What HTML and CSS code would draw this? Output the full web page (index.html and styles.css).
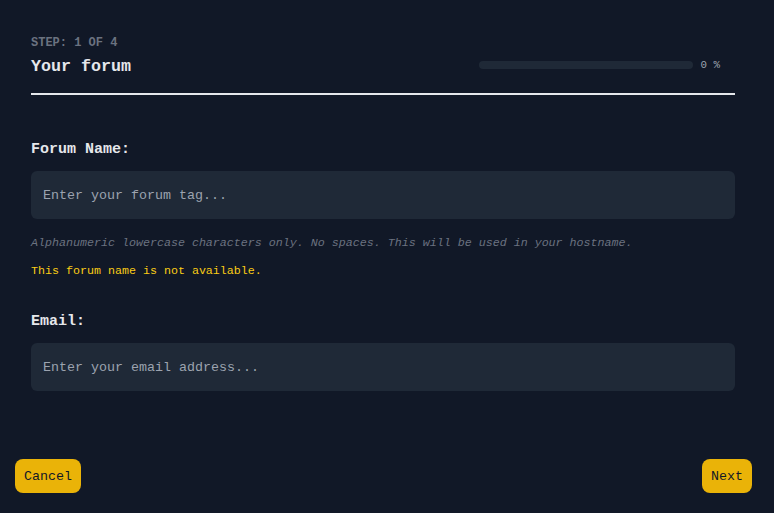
FILE: index.html
```html
<!DOCTYPE html>
<html>
<head>
<meta charset="utf-8">
<link rel="stylesheet" href="styles.css">
</head>
<body>
<div class="app">
  <div class="main">
    <header class="header">
      <div class="titles">
        <div class="step">STEP: 1 OF 4</div>
        <h1 class="title">Your forum</h1>
      </div>
      <div class="progress">
        <div class="bar"><div class="fill" style="width:0%"></div></div>
        <span class="pct">0 %</span>
      </div>
    </header>
    <form class="form">
      <div class="field">
        <label class="label">Forum Name:</label>
        <input class="input" type="text" placeholder="Enter your forum tag..." autofocus>
        <p class="hint">Alphanumeric lowercase characters only. No spaces. This will be used in your hostname.</p>
        <p class="error">This forum name is not available.</p>
      </div>
      <div class="field">
        <label class="label">Email:</label>
        <input class="input" type="text" placeholder="Enter your email address...">
      </div>
    </form>
  </div>
  <footer class="footer">
    <button class="btn">Cancel</button>
    <button class="btn">Next</button>
  </footer>
</div>
</body>
</html>
```
FILE: styles.css
```css
html, body {
  margin: 0;
  padding: 0;
  background: #111827;
  height: 100%;
}
body {
  font-family: "Liberation Mono", "DejaVu Sans Mono", monospace;
  color: #e5e7eb;
}
.app {
  height: 513px;
  display: flex;
  flex-direction: column;
  justify-content: space-between;
}
.main {
  padding: 0 39px 0 31px;
}
.header {
  display: flex;
  justify-content: space-between;
  align-items: flex-end;
  padding-top: 35px;
  padding-bottom: 16px;
  border-bottom: 2px solid #e5e7eb;
}
.step {
  font-size: 12px;
  font-weight: bold;
  color: #6b7280;
  line-height: 16px;
}
.title {
  margin: 6px 0 0;
  font-size: 16.67px;
  font-weight: bold;
  color: #e5e7eb;
  line-height: 20px;
}
.progress {
  display: flex;
  align-items: center;
  gap: 8px;
  padding-bottom: 5px;
  margin-right: 15px;
}
.bar {
  width: 214px;
  height: 8px;
  border-radius: 4px;
  background: #1f2937;
  overflow: hidden;
}
.fill {
  height: 100%;
  background: #eab308;
}
.pct {
  font-size: 10.8px;
  color: #9ca3af;
  line-height: 14px;
}
.form {
  padding-top: 45px;
}
.field {
  display: flex;
  flex-direction: column;
  margin-bottom: 33px;
}
.label {
  font-size: 15px;
  font-weight: bold;
  color: #e5e7eb;
  line-height: 20px;
  margin-bottom: 11px;
}
.input {
  height: 48px;
  box-sizing: border-box;
  border: none;
  border-radius: 6px;
  background: #1f2937;
  padding: 0 12px;
  font-family: inherit;
  font-size: 13.33px;
  color: #e5e7eb;
  outline: none;
  caret-color: #e5e7eb;
}
.input::placeholder {
  color: #9ca3af;
}
.hint {
  margin: 16px 0 0;
  font-size: 11.67px;
  font-style: italic;
  color: #6b7280;
  line-height: 16px;
}
.error {
  margin: 12px 0 0;
  font-size: 11.67px;
  color: #facc15;
  line-height: 16px;
}
.footer {
  display: flex;
  justify-content: space-between;
  padding: 0 22px 20px 15px;
}
.btn {
  height: 34px;
  padding: 0 9px;
  border: none;
  border-radius: 8px;
  background: #eab308;
  color: #111827;
  font-family: inherit;
  font-size: 13.33px;
  cursor: pointer;
}
```
